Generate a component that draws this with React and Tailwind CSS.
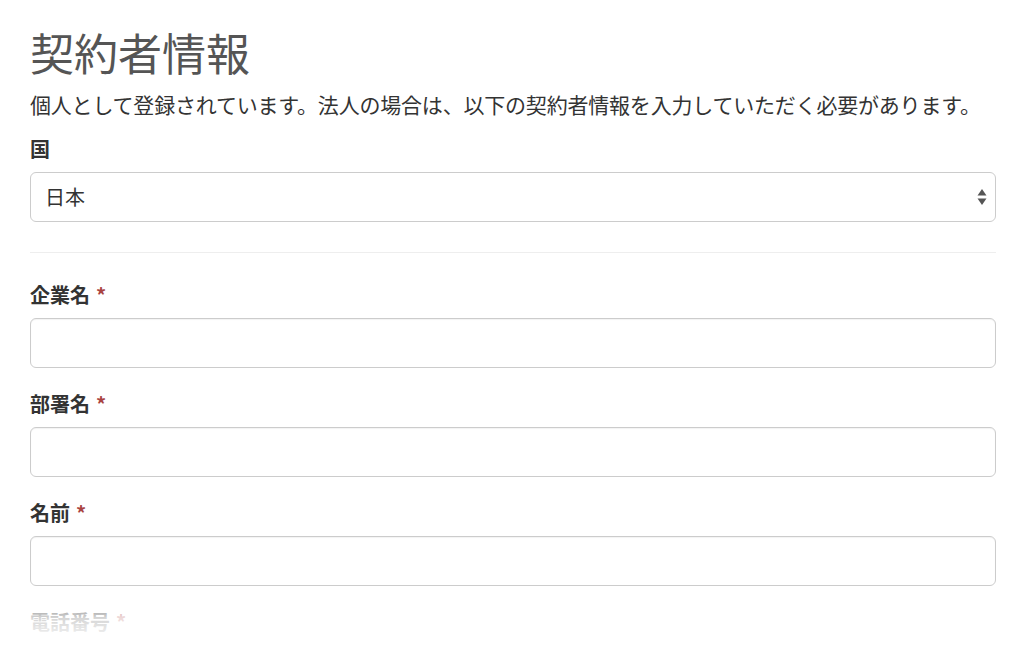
import React from 'react';

const FONT = { fontFamily: '"Noto Sans CJK JP", "Noto Sans", sans-serif' };

// 必須項目のラベル
const Label = ({ children, required = false }) => (
  <label className="block h-[28px] text-[20px] leading-[28px] font-bold text-[#333] mb-[9px]">
    {children}
    {required && <span className="ml-[6px] text-[#a94442]">*</span>}
  </label>
);

const TextField = ({ label }) => (
  <div className="mb-[22px]">
    <Label required>{label}</Label>
    <input
      type="text"
      className="block w-full h-[50px] rounded-[6px] border border-[#cccccc] bg-white px-[14px] text-[20px] outline-none shadow-[inset_0_1px_1px_rgba(0,0,0,0.05)]"
    />
  </div>
);

const SelectArrows = () => (
  <svg width="10" height="18" viewBox="0 0 10 18" className="absolute right-[8px] top-[15px]">
    <path d="M5 1 L9.5 7.5 L0.5 7.5 Z" fill="#555" />
    <path d="M5 17 L9.5 10.5 L0.5 10.5 Z" fill="#555" />
  </svg>
);

export default function App() {
  return (
    <div className="relative h-[646px] overflow-hidden bg-white" style={FONT}>
      <div className="px-[30px] pr-[28px] pt-[28px]">
        <h1 className="text-[44px] leading-[48px] font-normal text-[#555]">契約者情報</h1>
        <p className="mt-[13px] text-[21px] leading-[30px] text-[#333] tracking-[-0.2px] whitespace-nowrap">
          個人として登録されています。法人の場合は、以下の契約者情報を入力していただく必要があります。
        </p>

        <div className="mt-[16px]">
          <Label>国</Label>
          <div className="relative h-[50px] rounded-[6px] border border-[#cccccc] bg-white">
            <div className="px-[14px] text-[20px] leading-[48px] text-[#333]">日本</div>
            <SelectArrows />
          </div>
        </div>

        <hr className="mt-[30px] mb-[28px] border-0 border-t border-[#eeeeee]" />

        <TextField label="企業名" />
        <TextField label="部署名" />
        <TextField label="名前" />
        <TextField label="電話番号" />
      </div>

      {/* 下端のフェード */}
      <div className="pointer-events-none absolute left-0 right-0 bottom-0 h-[56px] bg-gradient-to-b from-white/0 via-white/80 to-white" />
    </div>
  );
}
